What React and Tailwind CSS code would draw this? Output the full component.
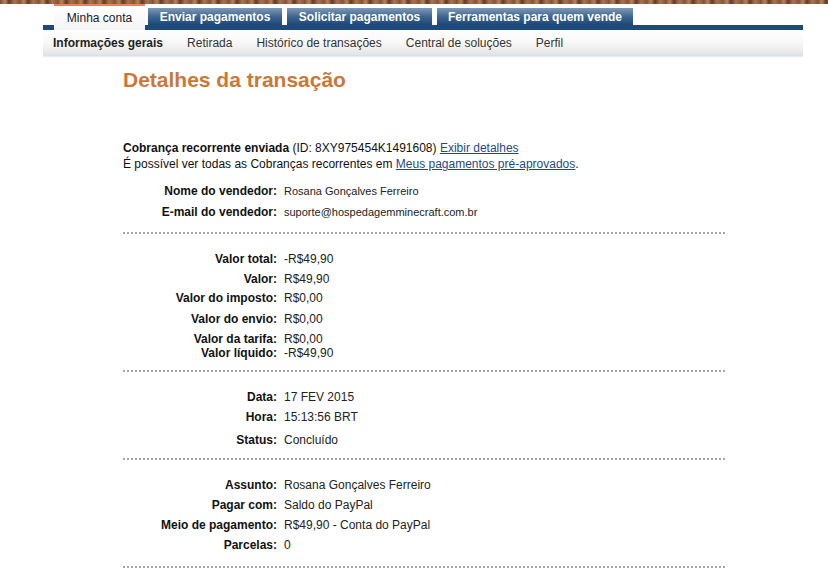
import React from 'react';

const tabs = [
  { label: 'Enviar pagamentos', w: 'w-[134px]', ml: 'ml-[3px]' },
  { label: 'Solicitar pagamentos', w: 'w-[145px]', ml: 'ml-[5px]' },
  { label: 'Ferramentas para quem vende', w: 'w-[196px]', ml: 'ml-[5px]' },
];

const subnav = [
  { label: 'Informações gerais', active: true },
  { label: 'Retirada' },
  { label: 'Histórico de transações' },
  { label: 'Central de soluções' },
  { label: 'Perfil' },
];

const Row = ({ label, value, mt = '', small = false }) => (
  <div className={`flex h-[16px] items-center leading-[16px] ${mt}`}>
    <div className="w-[154px] shrink-0 text-right text-[12px] font-bold text-[#111]">{label}</div>
    <div className={`pl-[7px] text-[#222] ${small ? 'text-[11px]' : 'text-[12px]'}`}>{value}</div>
  </div>
);

const Dotted = ({ mt }) => <div className={`w-[602px] border-t-2 border-dotted border-[#a8a8a8] ${mt}`} />;

const App = () => {
  return (
    <div className="h-[579px] w-[828px] overflow-hidden bg-white font-['Liberation_Sans',Arial,sans-serif]">
      {/* brown strip */}
      <div className="h-[4px] w-full bg-[repeating-linear-gradient(90deg,#7a5034_0px,#b98358_5px,#5e3b26_9px,#a87450_14px,#8a5c3e_19px)]" />

      {/* header */}
      <div className="mx-[43px] w-[760px]">
        <div className="flex h-[21px] items-end pl-[11px]">
          <div className="relative z-10 -mb-[5px] flex h-[26px] w-[91px] items-center justify-center border-t-2 border-[#e8835a] bg-gradient-to-b from-white to-[#f4f4f4] text-[12px] text-[#1a1a1a]">
            Minha conta
          </div>
          {tabs.map((t) => (
            <div
              key={t.label}
              className={`flex h-[17px] items-center justify-center bg-gradient-to-b from-[#7f9ab6] via-[#3f6690] to-[#1d4878] text-[12px] font-bold text-white ${t.w} ${t.ml}`}
            >
              {t.label}
            </div>
          ))}
        </div>
        <div className="h-[5px] bg-[#1e4a79]" />
        <div className="flex h-[25px] items-center gap-[24px] bg-gradient-to-b from-white via-[#f8f8f8] to-[#e4e4e4] pl-[10px] text-[12px] text-[#333]">
          {subnav.map((s) => (
            <span key={s.label} className={s.active ? 'font-bold text-[#222]' : ''}>
              {s.label}
            </span>
          ))}
        </div>
        <div className="h-[3px] bg-gradient-to-b from-[#d3dbe6] to-white" />
      </div>

      {/* content */}
      <div className="pl-[123px]">
        <h1 className="mt-[9px] text-[21px] font-bold leading-[25px] text-[#c9783a]">Detalhes da transação</h1>

        <div className="mt-[48px] text-[12px] leading-[16px] text-[#111]">
          <div>
            <span className="font-bold">Cobrança recorrente enviada</span> (ID: 8XY975454K1491608){' '}
            <a href="#" className="text-[#1f4a85] underline">Exibir detalhes</a>
          </div>
          <div>
            É possível ver todas as Cobranças recorrentes em{' '}
            <a href="#" className="text-[#1f4a85] underline">Meus pagamentos pré-aprovados</a>.
          </div>
        </div>

        <Row mt="mt-[11px]" label="Nome do vendedor:" value="Rosana Gonçalves Ferreiro" small />
        <Row mt="mt-[5px]" label="E-mail do vendedor:" value="suporte@hospedagemminecraft.com.br" small />
        <Dotted mt="mt-[12px]" />

        <Row mt="mt-[17px]" label="Valor total:" value="-R$49,90" />
        <Row mt="mt-[4px]" label="Valor:" value="R$49,90" />
        <Row mt="mt-[3px]" label="Valor do imposto:" value="R$0,00" />
        <Row mt="mt-[5px]" label="Valor do envio:" value="R$0,00" />
        <Row mt="mt-[4px]" label="Valor da tarifa:" value="R$0,00" />
        <Row mt="-mt-[2px]" label="Valor líquido:" value="-R$49,90" />
        <Dotted mt="mt-[9px]" />

        <Row mt="mt-[17px]" label="Data:" value="17 FEV 2015" />
        <Row mt="mt-[4px]" label="Hora:" value="15:13:56 BRT" />
        <Row mt="mt-[7px]" label="Status:" value="Concluído" />
        <Dotted mt="mt-[10px]" />

        <Row mt="mt-[17px]" label="Assunto:" value="Rosana Gonçalves Ferreiro" />
        <Row mt="mt-[4px]" label="Pagar com:" value="Saldo do PayPal" />
        <Row mt="mt-[4px]" label="Meio de pagamento:" value="R$49,90 - Conta do PayPal" />
        <Row mt="mt-[4px]" label="Parcelas:" value="0" />
        <Dotted mt="mt-[13px]" />
      </div>
    </div>
  );
};

export default App;
